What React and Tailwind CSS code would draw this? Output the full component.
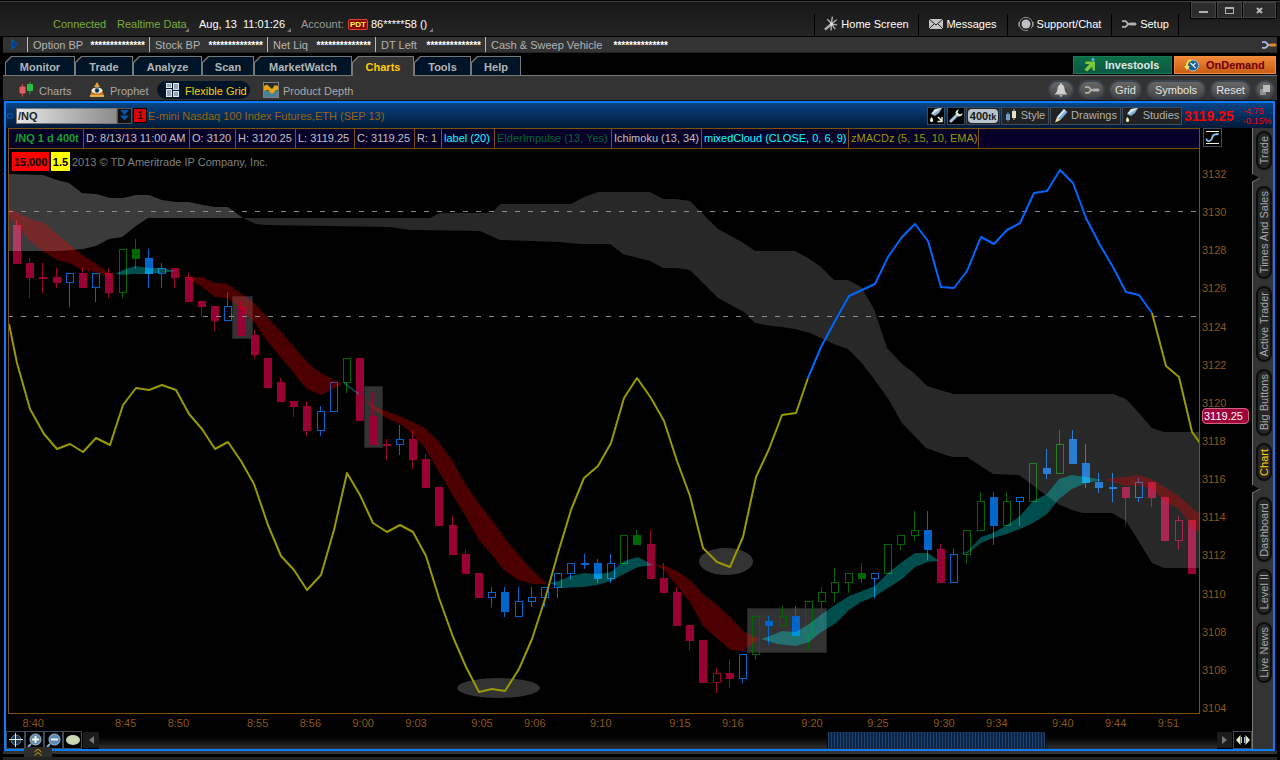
import React, { useState } from 'react';
import clsx from 'clsx';

const menuTabs = [
  { label: 'Monitor', width: 'w-[70px]' },
  { label: 'Trade', width: 'w-[58px]' },
  { label: 'Analyze', width: 'w-[69px]' },
  { label: 'Scan', width: 'w-[52px]' },
  { label: 'MarketWatch', width: 'w-[98px]' },
  { label: 'Charts', width: 'w-[62px]' },
  { label: 'Tools', width: 'w-[57px]' },
  { label: 'Help', width: 'w-[50px]' },
];

const balances = [
  { label: 'Option BP', width: 'w-[122px]' },
  { label: 'Stock BP', width: 'w-[118px]' },
  { label: 'Net Liq', width: 'w-[108px]' },
  { label: 'DT Left', width: 'w-[110px]' },
  { label: 'Cash & Sweep Vehicle', width: 'w-[187px]' },
];

const studies = [
  { text: '/NQ 1 d 400t', style: 'w-[75px] text-center font-bold text-[#14a028]' },
  { text: 'D: 8/13/13 11:00 AM', style: 'w-[106px] text-[#c0c0c0]' },
  { text: 'O: 3120', style: 'w-[46px] text-[#c0c0c0]' },
  { text: 'H: 3120.25', style: 'w-[60px] text-[#c0c0c0]' },
  { text: 'L: 3119.25', style: 'w-[59px] text-[#c0c0c0]' },
  { text: 'C: 3119.25', style: 'w-[60px] text-[#c0c0c0]' },
  { text: 'R: 1', style: 'w-[27px] text-[#c0c0c0]' },
  { text: 'label (20)', style: 'w-[53px] text-[#00ffff]' },
  { text: 'ElderImpulse (13, Yes)', style: 'w-[117px] text-[#006633]' },
  { text: 'Ichimoku (13, 34)', style: 'w-[90px] text-[#c0c0c0]' },
  { text: 'mixedCloud (CLOSE, 0, 6, 9)', style: 'w-[147px] text-[#00ffff]' },
  { text: 'zMACDz (5, 15, 10, EMA)', style: 'w-[130px] text-[#999900]' },
];

const sideTabs = [
  { label: 'Trade', height: 'h-[39px]', notch: true },
  { label: 'Times And Sales', height: 'h-[93px]' },
  { label: 'Active Trader', height: 'h-[76px]' },
  { label: 'Big Buttons', height: 'h-[67px]' },
  { label: 'Chart', height: 'h-[38px]', notch: true },
  { label: 'Dashboard', height: 'h-[65px]' },
  { label: 'Level II', height: 'h-[46px]' },
  { label: 'Live News', height: 'h-[61px]' },
];

const prices = [3132, 3130, 3128, 3126, 3124, 3122, 3120, 3118, 3116, 3114, 3112, 3110, 3108, 3106, 3104];

// [candle index, label]
const times = [
  [1, '8:40'], [8, '8:45'], [12, '8:50'], [18, '8:55'], [22, '8:56'], [26, '9:00'], [30, '9:03'],
  [35, '9:05'], [39, '9:06'], [44, '9:10'], [50, '9:15'], [54, '9:16'], [60, '9:20'], [65, '9:25'],
  [70, '9:30'], [74, '9:34'], [79, '9:40'], [83, '9:44'], [87, '9:51'],
];

// [colour, body top, body bottom, high, low], upper case = solid body
const candles = [
  ['R', 225, 264, 220, 264], ['R', 263, 278, 258, 298], ['R', 277, 279, 263, 293], ['R', 277, 283, 268, 288],
  ['b', 273, 283, 273, 307], ['R', 273, 288, 268, 288], ['b', 273, 288, 273, 302], ['R', 273, 293, 268, 298],
  ['g', 249, 293, 249, 298], ['G', 249, 259, 239, 269], ['B', 258, 274, 249, 288], ['b', 268, 274, 263, 288],
  ['R', 268, 278, 268, 288], ['R', 277, 302, 273, 302], ['R', 301, 307, 301, 317], ['R', 306, 321, 306, 331],
  ['b', 306, 321, 292, 321], ['R', 306, 336, 301, 336], ['R', 335, 355, 330, 359], ['R', 358, 388, 358, 388],
  ['R', 382, 402, 378, 402], ['R', 401, 407, 401, 417], ['R', 406, 431, 401, 436], ['b', 411, 431, 406, 436],
  ['b', 382, 412, 382, 412], ['g', 358, 383, 358, 393], ['R', 358, 421, 358, 421], ['R', 416, 445, 392, 445],
  ['R', 444, 446, 439, 460], ['b', 439, 445, 425, 455], ['R', 439, 460, 430, 469], ['R', 459, 488, 454, 488],
  ['R', 487, 526, 487, 526], ['R', 525, 555, 516, 555], ['R', 554, 574, 549, 574], ['R', 573, 598, 573, 598],
  ['b', 592, 598, 587, 607], ['B', 592, 612, 587, 617], ['b', 601, 617, 587, 617], ['b', 597, 602, 587, 607],
  ['b', 587, 598, 587, 607], ['b', 573, 588, 573, 598], ['b', 563, 574, 563, 579], ['B', 563, 565, 554, 569],
  ['B', 563, 579, 559, 583], ['b', 563, 579, 554, 583], ['g', 535, 564, 535, 564], ['G', 535, 545, 530, 545],
  ['R', 544, 579, 530, 579], ['R', 578, 593, 563, 593], ['R', 592, 626, 587, 626], ['R', 625, 641, 625, 650],
  ['R', 640, 683, 640, 683], ['r', 673, 683, 668, 693], ['R', 673, 679, 659, 688], ['b', 654, 679, 654, 683],
  ['g', 616, 655, 616, 660], ['B', 621, 626, 616, 645], ['g', 616, 626, 606, 626], ['B', 616, 636, 606, 636],
  ['g', 601, 636, 601, 650], ['g', 592, 602, 587, 622], ['g', 582, 593, 568, 602], ['g', 573, 583, 573, 593],
  ['G', 573, 579, 563, 583], ['b', 573, 579, 573, 598], ['g', 544, 574, 544, 574], ['g', 535, 545, 535, 550],
  ['g', 530, 536, 511, 541], ['B', 530, 550, 511, 560], ['R', 549, 583, 544, 583], ['b', 554, 583, 549, 583],
  ['g', 530, 555, 530, 564], ['g', 501, 531, 492, 531], ['B', 497, 526, 492, 545], ['g', 501, 526, 492, 526],
  ['b', 497, 502, 497, 526], ['g', 463, 502, 463, 502], ['B', 468, 474, 449, 479], ['g', 444, 474, 430, 474],
  ['B', 439, 464, 430, 464], ['B', 463, 483, 444, 488], ['B', 482, 488, 473, 493], ['B', 487, 489, 473, 502],
  ['R', 487, 498, 487, 526], ['b', 482, 498, 478, 502], ['R', 482, 498, 482, 507], ['R', 497, 541, 497, 541],
  ['r', 520, 541, 516, 550], ['R', 520, 574, 520, 574],
];

const candleColors = { r: '#990033', g: '#006600', b: '#0066cc' };

const oscillatorLow =
  '9,324 17,363 30,409 44,434 57,449 70,444 83,452 96,438 110,445 123,405 136,388 149,390 162,385 176,390 189,414 202,429 215,449 228,442 241,461 254,484 268,525 281,556 294,570 307,590 321,575 334,530 347,473 360,495 373,523 387,532 400,525 413,532 426,556 439,598 453,637 466,667 479,692 492,689 505,691 519,669 532,639 545,599 558,553 571,510 584,478 598,466 611,443 624,398 637,378 651,398 664,421 677,461 690,496 703,548 717,562 730,567 743,537 756,477 769,449 782,415 796,413 808,378';
const oscillatorHigh =
  '808,378 821,347 835,321 849,296 875,284 888,257 902,237 915,224 928,241 941,287 954,288 967,271 981,237 994,244 1007,230 1020,223 1034,193 1047,191 1060,170 1073,183 1086,218 1100,245 1113,267 1126,292 1139,295 1152,313';
const oscillatorEnd = '1152,313 1166,366 1179,377 1192,432 1200,443';

const bearClouds = [
  '9,209 17,212 30,219 44,223 57,234 69,244 82,255 95,263 109,273 112,275 109,277 95,272 82,270 69,263 57,260 44,252 30,241 17,226 9,217',
  '180,273 189,277 202,277 215,283 228,284 255,304 268,318 282,333 294,347 308,363 321,373 334,380 343,384 333,389 321,395 307,389 300,381 294,373 282,359 268,342 255,323 241,309 228,298 215,297 202,287 189,279',
  '361,395 373,406 386,411 400,416 413,422 425,428 439,442 452,460 466,485 480,505 492,520 506,540 518,554 532,570 547,584 533,584 518,580 504,570 492,555 479,540 466,517 452,494 439,472 425,448 413,434 400,424 386,418 373,409',
  '655,565 664,565 677,571 690,580 703,594 717,605 730,617 743,631 759,639 743,651 730,650 717,638 703,626 690,602 677,586 664,570',
  '1104,480 1113,478 1126,477 1138,475 1152,479 1166,488 1179,496 1192,508 1199,513 1199,532 1192,527 1179,509 1166,502 1152,489 1138,485 1126,486 1113,482',
];

const bullClouds = [
  '115,274 123,270 135,266 149,268 162,268 176,271 162,273 149,274 133,274 123,275',
  '344,382 359,393 359,395 344,384',
  '550,583 558,581 571,576 584,573 598,574 611,572 624,561 638,557 653,565 638,567 624,574 611,581 597,585 583,587 560,588',
  '761,639 770,636 782,631 796,632 809,624 822,614 835,605 849,596 862,591 875,586 888,573 902,562 915,553 928,553 939,561 928,562 915,567 902,579 888,588 874,597 861,602 849,610 836,623 820,633 809,642 796,646 777,644',
  '960,554 968,551 981,537 993,533 1007,525 1020,516 1033,501 1047,494 1059,479 1072,475 1086,477 1103,480 1086,483 1072,489 1059,499 1047,514 1033,523 1020,529 1007,534 993,538 981,543 968,553',
];

const kumoLeft =
  '9,174 43,175 57,180 69,183 82,193 96,194 110,198 123,198 136,195 149,195 162,200 176,202 189,202 203,205 215,207 228,207 243,218 148,218 136,226 122,237 109,239 96,246 83,249 60,251 9,251';
const kumoRight =
  '243,218 430,218 440,213 492,213 500,204 571,204 584,197 598,192 650,192 663,199 676,199 690,201 718,229 742,242 755,251 795,251 808,258 820,266 834,280 848,280 861,287 874,309 887,348 902,364 914,373 927,386 940,390 954,394 1113,394 1126,399 1138,412 1152,428 1164,432 1200,432 ' +
  '1200,568 1164,568 1152,563 1138,540 1126,521 1112,513 1083,513 1072,510 1060,505 1047,496 1019,475 993,474 967,457 952,457 940,453 926,448 902,423 889,400 874,379 861,362 848,349 836,345 810,333 795,329 782,327 772,326 755,323 744,312 718,298 690,270 676,268 663,268 650,261 623,254 610,244 580,244 560,242 500,240 480,231 410,230 390,227 265,225 256,224';

const Candle = ({ index, data }) => {
  const [kind, top, bottom, high, low] = data;
  const x = Math.round(17 + 13.2 * index);
  const color = candleColors[kind.toLowerCase()];
  const solid = kind === kind.toUpperCase();
  return (
    <g shapeRendering="crispEdges">
      {high < top && <rect x={x - 1} y={high} width="1" height={top - high} fill={color} />}
      {low > bottom && <rect x={x - 1} y={bottom} width="1" height={low - bottom} fill={color} />}
      {solid ? (
        <rect x={x - 4} y={top} width="8" height={bottom - top} fill={color} />
      ) : (
        <rect x={x - 3.5} y={top + 0.5} width="7" height={bottom - top - 1} fill="none" stroke={color} />
      )}
    </g>
  );
};

const PriceChart = () => (
  <svg
    className="block h-full w-full"
    viewBox="9 149 1190 564"
    preserveAspectRatio="none"
    role="img"
    aria-label="E-mini Nasdaq 100 candlestick chart"
  >
    {/* marked areas */}
    <g fill="#333333" stroke="#222222">
      <rect x="232.5" y="296.5" width="20" height="42" />
      <rect x="364.5" y="386.5" width="18" height="61" />
      <rect x="747.5" y="608.5" width="79" height="44" />
    </g>
    <g fill="#333333">
      <ellipse cx="498.5" cy="688" rx="41.5" ry="10" />
      <ellipse cx="726" cy="561.5" rx="27" ry="13.5" />
    </g>

    {candles.map((c, i) => (
      <Candle key={i} index={i} data={c} />
    ))}

    {/* clouds */}
    <g fill="#ffffff">
      <polygon points={kumoLeft} fillOpacity="0.23" />
      <polygon points={kumoRight} fillOpacity="0.157" />
    </g>
    <g fill="#ff0000" fillOpacity="0.3">
      {bearClouds.map((p) => <polygon key={p} points={p} />)}
    </g>
    <g fill="#00ffff" fillOpacity="0.3">
      {bullClouds.map((p) => <polygon key={p} points={p} />)}
    </g>

    <g stroke="#8c8c8c" strokeDasharray="5 8" strokeDashoffset="1" shapeRendering="crispEdges">
      <path d="M9 211.5H1199" />
      <path d="M9 316.5H1199" />
    </g>

    <g fill="none" strokeWidth="2" strokeLinejoin="round">
      <polyline points={oscillatorLow} stroke="#999900" />
      <polyline points={oscillatorHigh} stroke="#0066ff" />
      <polyline points={oscillatorEnd} stroke="#999900" />
    </g>
  </svg>
);

const Wrench = ({ className, handle = '#b0b0b0', head = '#b0b0b0' }) => (
  <svg className={className} width="16" height="8" viewBox="0 0 16 8" aria-hidden="true">
    <path d="M1 1.2h3.5L6.5 3v2L4.5 6.8H1" fill="none" stroke={head} strokeWidth="1.8" />
    <path d="M6 4h3" stroke={head} strokeWidth="2" />
    <rect x="8" y="2.5" width="7.5" height="3" rx="1.5" fill={handle} />
  </svg>
);

const Corner = () => (
  <svg className="mt-3 shrink-0" width="4" height="4" viewBox="0 0 4 4" aria-hidden="true">
    <path d="M4 0v4H0z" fill="#777" />
  </svg>
);

const SpiderIcon = () => (
  <svg width="14" height="16" viewBox="0 0 15 17" fill="none" stroke="#b0b0b0" aria-hidden="true">
    <path d="M9 0.5L8 7M3.5 3.5l4 4M13.5 4l-5 4M14 9.5L8 8.5M12 14L8.5 9M7.5 15.5L8 9" strokeWidth="1.5" />
    <path d="M1 14.5L7.5 9" strokeWidth="2.6" />
    <circle cx="8" cy="8.5" r="1.8" fill="#ddd" stroke="none" />
  </svg>
);

const MailIcon = () => (
  <svg width="14" height="10" viewBox="0 0 14 10" aria-hidden="true">
    <rect width="14" height="10" fill="#c4c4c4" />
    <path d="M0 0l7 6 7-6M0 10l5-5M14 10L9 5" fill="none" stroke="#222" />
  </svg>
);

const HeadsetIcon = () => (
  <svg width="16" height="16" viewBox="0 0 16 16" aria-hidden="true">
    <circle cx="8" cy="8" r="4.5" fill="#c0c0c0" />
    <path d="M3 12.5a6.7 6.7 0 1 1 10 0" fill="none" stroke="#8c8c8c" />
    <path d="M1.2 6v4.5M14.8 6v4.5" stroke="#a0a0a0" strokeWidth="1.4" />
    <path d="M3 12.5q3 3 7 2" fill="none" stroke="#8c8c8c" />
  </svg>
);

const CandlesIcon = () => (
  <svg width="15" height="15" viewBox="0 0 15 15" aria-hidden="true">
    <path d="M3.5 2v12.5" stroke="#c44" strokeWidth="1.2" />
    <rect x="0.5" y="4.5" width="6" height="7" rx="1" fill="#e06060" />
    <path d="M11 0v12" stroke="#1a8f2a" strokeWidth="1.2" />
    <rect x="8" y="2" width="6" height="7" rx="1" fill="#28c040" />
  </svg>
);

const ProphetIcon = () => (
  <svg width="16" height="15" viewBox="0 0 16 15" aria-hidden="true">
    <path d="M8 0l3 5H5z" fill="#f0a030" />
    <path d="M4 6h8l3.5 8.5H.5z" fill="#c87820" />
    <path d="M1 14h14" stroke="#f4c060" strokeWidth="1.6" />
    <ellipse cx="8" cy="8.5" rx="5.5" ry="3" fill="#f4ead8" />
    <circle cx="8" cy="8.5" r="2.4" fill="#24628c" />
    <circle cx="8" cy="8.5" r="1" fill="#000" />
  </svg>
);

const FlexGridIcon = () => (
  <svg width="14" height="14" viewBox="0 0 14 14" fill="#8ea4b6" stroke="#dce8f0" aria-hidden="true">
    <rect x="0.5" y="0.5" width="5" height="4" />
    <rect x="7.5" y="0.5" width="5" height="6" />
    <rect x="0.5" y="6.5" width="5" height="7" />
    <rect x="7.5" y="8.5" width="5" height="5" />
  </svg>
);

const DepthIcon = () => (
  <svg width="16" height="16" viewBox="0 0 16 16" aria-hidden="true">
    <rect x="0.5" y="0.5" width="15" height="15" fill="#2a2a2a" stroke="#808080" />
    <path d="M1 9h14v6H1z" fill="#4d8296" />
    <path d="M1 4l3-1.500 5 4.500 3-4 3 1v4l-3 1-3 3-4-4-4 1z" fill="#e0a818" />
  </svg>
);

const InvestIcon = () => (
  <svg width="13" height="14" viewBox="0 0 13 14" aria-hidden="true">
    <path d="M1.5 3.5H11v9H8.5v-4L3 13.5.5 11.5l5-5.500h-4z" fill="#7ec83c" />
    <circle cx="9" cy="1.500" r="1.500" fill="#6ab0e8" />
  </svg>
);

const ReplayIcon = () => (
  <svg width="15" height="13" viewBox="0 0 15 13" aria-hidden="true">
    <circle cx="9" cy="6.5" r="5.5" fill="#1d5f8c" stroke="#9cc4dc" />
    <path d="M6.5 4l5 5M11.5 4L9 6.5" stroke="#e4f0f8" strokeWidth="1.2" />
    <path d="M7 1Q2.5 2.5 3 7" fill="none" stroke="#f8d840" strokeWidth="2" />
    <path d="M0 7h6l-3 4z" fill="#f8e060" />
  </svg>
);

const BellIcon = () => (
  <svg width="14" height="14" viewBox="0 0 14 14" fill="#d0d0d0" aria-hidden="true">
    <path d="M7 0q1 0 1 1.5 2.5 1 2.5 4.5 0 3 3 5.5H.5Q3.5 9 3.5 6 3.5 2.5 6 1.5 6 0 7 0z" />
    <path d="M5 12.3h4L7 14z" />
  </svg>
);

const BrushIcon = ({ arrow }) => (
  <svg width="15" height="15" viewBox="0 0 15 15" aria-hidden="true">
    <path d="M6 1l7-1-3 5-4 3-4-2z" fill="#8ab0d0" />
    <path d="M6 1l7-1-9 6-1.5-.5z" fill="#d8e8f4" />
    <path d="M2.5 9q2.5 3 1.2 4.500-1.200 1-2.200 0Q0 12 2.500 9z" fill="#e8f0c0" />
    {arrow && <path d="M9 9l3.5 3.5M13 9v4.5H8.5" fill="none" stroke="#e8f0d8" strokeWidth="1.5" />}
  </svg>
);

const SpannerIcon = () => (
  <svg width="14" height="14" viewBox="0 0 14 14" aria-hidden="true">
    <path d="M2 12l6-6" stroke="#a8c4dc" strokeWidth="3" strokeLinecap="round" />
    <path d="M10 0.5Q6.5 1 6.5 4.5l3 3Q13.5 7.5 13.5 4L11 5.5l-2.500-2z" fill="#e4ecd0" />
  </svg>
);

const PencilIcon = () => (
  <svg width="14" height="14" viewBox="0 0 14 14" aria-hidden="true">
    <path d="M10 0l3.500 3-7 8-3.500-3z" fill="#7fb0dc" />
    <path d="M10 0l1.500 1.500-7 7.500L3 8z" fill="#d4e8f8" />
    <path d="M3 8l3.500 3L1 13.500z" fill="#e8e0b0" />
  </svg>
);

const StyleIcon = () => (
  <svg width="12" height="13" viewBox="0 0 12 13" aria-hidden="true">
    <path d="M3 3v10" stroke="#5a86ac" />
    <rect x="1" y="5" width="4" height="6" fill="#6f9cc4" />
    <path d="M9 0v11" stroke="#b8c8a8" />
    <rect x="7" y="2" width="4" height="7" fill="#dce4cc" />
  </svg>
);

const TopBar = () => {
  const links = [
    { label: 'Home Screen', icon: <SpiderIcon />, width: 'w-[104px]' },
    { label: 'Messages', icon: <MailIcon />, width: 'w-[89px]' },
    { label: 'Support/Chat', icon: <HeadsetIcon />, width: 'w-[104px]' },
    { label: 'Setup', icon: <Wrench />, width: 'w-[67px]' },
  ];

  return (
    <header className="flex h-[37px] shrink-0 border-t border-b border-black bg-[#1c1c1c]">
      <div className="flex flex-1 border-t border-[#3c3c3c] bg-linear-to-b from-[#181818] to-[#242424] pr-[3px]">
        <div className="flex flex-1 items-center pt-[10px] pl-[53px] whitespace-nowrap text-[#7aab3c]">
          <span className="w-16">Connected</span>
          <span className="w-[68px]">Realtime Data</span>
          <Corner />
          <span className="ml-[10px] w-[88px] whitespace-pre text-white">Aug, 13  11:01:26</span>
          <Corner />
          <span className="ml-[10px] w-[47px] text-[#999]">Account:</span>
          <span className="mr-[3px] h-[11px] w-5 rounded-xs border border-[#e04040] bg-[#8c0000] text-center text-[8px] leading-[9px] font-bold text-[#ffff40]">
            PDT
          </span>
          <span className="w-[58px] text-white">86*****58 ()</span>
          <Corner />
        </div>
        <nav className="flex text-white">
          {links.map((link) => (
            <a
              key={link.label}
              href="#"
              className={clsx('mt-3 flex items-center justify-center gap-[3px] border-l border-black pb-[2px] whitespace-nowrap', link.width)}
            >
              {link.icon}
              {link.label}
            </a>
          ))}
          <div className="mt-3 w-3 border-l border-black" />
        </nav>
        <div className="flex h-[17px] gap-px bg-black px-px pb-px">
          <button aria-label="Minimize" className="flex w-[25px] items-center justify-center border border-[#444] bg-[#2c2c2c]">
            <span className="mt-1 h-[2px] w-[9px] bg-[#b0b0b0]" />
          </button>
          <button aria-label="Maximize" className="flex w-[25px] items-center justify-center border border-[#444] bg-[#2c2c2c]">
            <span className="h-[7px] w-[9px] border border-t-2 border-[#b0b0b0]" />
          </button>
          <button aria-label="Close" className="flex w-[33px] items-center justify-center border border-[#444] bg-[#2c2c2c]">
            <svg width="7" height="7" viewBox="0 0 7 7"><path d="M1 1l5 5M6 1L1 6" stroke="#b8b8b8" strokeWidth="2" /></svg>
          </button>
        </div>
      </div>
    </header>
  );
};

const AccountBar = () => (
  <div className="mx-[3px] flex h-4 shrink-0 items-center border-b border-[#222] bg-[#333]">
    <svg className="mr-[9px] ml-2 shrink-0" width="7" height="11" viewBox="0 0 7 11" aria-hidden="true">
      <path d="M1 0.5l5 5-5 5z" fill="#003c80" stroke="#0060c0" />
    </svg>
    {balances.map((b) => (
      <div
        key={b.label}
        className={clsx('flex h-[15px] shrink-0 items-center justify-between border-l border-[#bbb] pt-px pr-1 pl-[5px] text-[#b4b4b4]', b.width)}
      >
        <span>{b.label}</span>
        <span className="text-[10px] font-bold text-white">**************</span>
      </div>
    ))}
    <Wrench className="ml-auto" head="#a8b8e0" handle="#e08a20" />
  </div>
);

const MenuTabs = () => {
  const [active, setActive] = useState('Charts');

  return (
    <div className="mx-[3px] mt-[3px] flex h-[20px] shrink-0 justify-between border-b border-[#777]">
      <nav className="-mb-px flex pl-[2px]">
        {menuTabs.map(({ label, width }) => (
          <button
            key={label}
            onClick={() => setActive(label)}
            className={clsx(
              'bg-[#777] pt-px pr-px pl-px font-bold [clip-path:polygon(6px_0,100%_0,100%_100%,0_100%,0_6px)]',
              active !== label && 'pb-px',
              width
            )}
          >
            <span
              className={clsx(
                'flex h-full items-center justify-center pt-[2px] [clip-path:polygon(6px_0,100%_0,100%_100%,0_100%,0_6px)]',
                active === label ? 'bg-[#333] text-[#ffcc00]' : 'bg-[#001428] text-[#b4b4b4]'
              )}
            >
              {label}
            </span>
          </button>
        ))}
      </nav>
      <div className="flex gap-[2px] pr-px pb-px">
        <button className="flex w-[99px] items-center gap-2 border border-[#1a7a58] bg-linear-to-b from-[#0c7048] to-[#0c5844] pl-[10px] font-bold text-[#e0e8e0]">
          <InvestIcon />
          Investools
        </button>
        <button className="flex w-[102px] items-center gap-[7px] border border-[#f09040] bg-linear-to-b from-[#f08838] to-[#c85c10] pl-[9px] font-bold text-[#6c0000]">
          <ReplayIcon />
          OnDemand
        </button>
      </div>
    </div>
  );
};

const PILL = 'flex h-[19px] items-center justify-center rounded-full border-2 border-[#3c4450] bg-linear-to-b from-[#666] to-[#484848] text-[#e4e4e4]';

const SubNav = () => (
  <div className="mx-[3px] flex h-[25px] shrink-0 items-center border-b border-[#111] bg-[#333] pt-[3px] text-[#a8a8a8]">
    <button className="ml-4 flex w-[70px] items-center gap-[5px]"><CandlesIcon /><span className="pt-[3px]">Charts</span></button>
    <button className="flex w-[68px] items-center gap-[5px]"><ProphetIcon /><span className="pt-[3px]">Prophet</span></button>
    <button className="flex h-[18px] w-[93px] items-center gap-[5px] rounded-full bg-[#001428] pl-[9px] whitespace-nowrap text-[#ffcc00]">
      <FlexGridIcon />
      <span className="pt-[3px]">Flexible Grid</span>
    </button>
    <button className="ml-[13px] flex items-center gap-1 whitespace-nowrap"><DepthIcon /><span className="pt-[3px]">Product Depth</span></button>
    <div className="mr-[2px] ml-auto flex gap-1">
      <button aria-label="Alerts" className={clsx(PILL, 'w-[26px]')}><BellIcon /></button>
      <button aria-label="Settings" className={clsx(PILL, 'w-[27px]')}><Wrench /></button>
      <button className={clsx(PILL, 'w-[33px] pt-[2px]')}>Grid</button>
      <button className={clsx(PILL, 'w-[60px] pt-[2px]')}>Symbols</button>
      <button className={clsx(PILL, 'w-[41px] pt-[2px]')}>Reset</button>
      <button aria-label="Detach" className={clsx(PILL, 'w-5')}>
        <svg width="10" height="10" viewBox="0 0 10 10"><path d="M0 4h6v6H0z" fill="#909090" /><path d="M3 0h7v7H3z" fill="#bbb" /></svg>
      </button>
    </div>
  </div>
);

const TOOL = 'flex h-[18px] items-center justify-center border border-[#3c4c5c] bg-[#222] text-[#b0b0b0]';

const SymbolBar = () => (
  <div className="flex h-[25px] shrink-0 items-center bg-linear-to-b from-[#0a4488] to-[#021a38] pr-[2px] pl-px">
    <span className="mr-[3px] size-[6px] shrink-0 rounded-full border border-[#0060c0]" />
    <input
      aria-label="Symbol"
      defaultValue="/NQ"
      className="h-4 w-[101px] border border-[#777] bg-linear-to-r from-[#e8e8e8] to-[#8c8c8c] pl-px font-bold text-[#222]"
    />
    <button aria-label="Symbol list" className="flex h-4 w-[15px] items-center justify-center border border-[#555] bg-[#111]">
      <svg width="9" height="11" viewBox="0 0 9 11"><path d="M0 0h9L4.5 5zM0 5.5h9l-4.5 5z" fill="#0a54a8" /></svg>
    </button>
    <button className="mr-px ml-px h-[15px] w-[14px] border border-black bg-[#e00000] leading-[13px] text-black">1</button>
    <span className="pt-px whitespace-nowrap text-[#9c640c]">E-mini Nasdaq 100 Index Futures,ETH (SEP 13)</span>
    <div className="ml-auto flex gap-px">
      <button aria-label="Edit studies" className={clsx(TOOL, 'mr-px w-[18px] bg-black')}><BrushIcon arrow /></button>
      <button aria-label="Chart settings" className={clsx(TOOL, 'w-[18px] bg-black')}><SpannerIcon /></button>
      <button className={clsx(TOOL, 'w-[34px]')}>
        <span className="h-[14px] w-[30px] rounded-sm bg-[#b8c4cc] text-center leading-[14px] font-bold text-[#181818]">400<span className="text-[9px]">tk</span></span>
      </button>
      <button className={clsx(TOOL, 'w-12 gap-1')}><StyleIcon />Style</button>
      <button className={clsx(TOOL, 'w-[71px] gap-[3px]')}><PencilIcon />Drawings</button>
      <button className={clsx(TOOL, 'w-[60px] gap-[3px]')}><BrushIcon />Studies</button>
    </div>
    <span className="ml-[2px] w-[59px] pt-px text-[14px] font-bold text-[#ff0000]">3119.25</span>
    <span className="w-7 text-[9px] leading-[10px] whitespace-nowrap text-[#ff0000]">-4.75<br />-0.15%</span>
  </div>
);

const StudyBar = () => (
  <div className="flex h-[21px] shrink-0">
    <div className="flex min-w-0 flex-1 border border-[#80500f] bg-[#060028]">
      {studies.map(({ text, style }) => (
        <span key={text} className={clsx('shrink-0 border-r border-[#80500f] pl-[2px] leading-[18px] whitespace-nowrap', style)}>
          {text}
        </span>
      ))}
    </div>
    <div className="w-[52px] pl-[3px]">
      <button aria-label="Toggle curve" className="size-[19px] border border-[#3c4c5c] bg-black p-px">
        <svg width="15" height="15" viewBox="0 0 15 15" fill="none">
          <path d="M1 1.5h13M1 13.5h13" stroke="#f0f4d8" />
          <path d="M1.5 8.5q0 3 3 2.5 2.5-1 3-4 .5-3 6-3" stroke="#8cc4ec" strokeWidth="1.8" />
        </svg>
      </button>
    </div>
  </div>
);

const SideTabs = () => {
  const [active, setActive] = useState('Chart');

  return (
    <aside className="flex w-[21px] shrink-0 flex-col items-end gap-[7px] border-l border-[#777] bg-[#333] pt-[3px] pr-px">
      {sideTabs.map(({ label, height, notch }) => (
        <React.Fragment key={label}>
          <button
            onClick={() => setActive(label)}
            className={clsx(
              'flex w-4 shrink-0 items-center justify-center rounded-lg border-2 border-[#0c0c0c] bg-[#262626]',
              active === label ? 'text-[#ffcc00]' : 'text-[#a8a8a8]',
              height
            )}
          >
            <span className="rotate-180 leading-3 whitespace-nowrap [writing-mode:vertical-rl]">{label}</span>
          </button>
          {notch && (
            <svg className="-my-[3px] -ml-px shrink-0 self-start" width="9" height="8" viewBox="0 0 9 8" aria-hidden="true">
              <path d="M0 0l8 4-8 4z" fill="#000" />
              <path d="M0 8l8-4" stroke="#777" />
            </svg>
          )}
        </React.Fragment>
      ))}
    </aside>
  );
};

const ChartArea = () => (
  <div className="flex min-h-0 flex-1">
    <div className="flex min-w-0 flex-1 flex-col">
      <div className="relative min-h-0 flex-1 border border-t-0 border-[#80500f]">
        <PriceChart />
        <div className="absolute top-[3px] left-[3px] flex items-center gap-[2px] whitespace-nowrap">
          <span className="h-[19px] w-[37px] bg-[#ff0000] text-center leading-[20px] font-bold text-black">15,000</span>
          <span className="h-[19px] w-[19px] bg-[#ffff00] text-center leading-[20px] font-bold text-black">1.5</span>
          <span className="pt-[2px] text-[#808080]">2013 © TD Ameritrade IP Company, Inc.</span>
        </div>
      </div>
      <div className="relative h-[17px] shrink-0 text-[#8c5814]">
        {times.map(([index, label]) => (
          <span
            key={label}
            className="absolute top-[3px] -translate-x-1/2"
            style={{ left: `${((12 + 13.2 * index) / 1192) * 100}%` }}
          >
            {label}
          </span>
        ))}
      </div>
    </div>
    <div className="relative mb-4 flex w-[52px] flex-col justify-between pt-[18px] pl-[2px] text-[#8c5814]">
      {prices.map((p) => (
        <span key={p} className="leading-[14px]">{p}</span>
      ))}
      <span
        className="absolute left-[2px] h-4 w-[47px] rounded-sm border border-[#d06088] bg-[#a00038] pl-px leading-[14px] text-white"
        style={{ top: `${((416 - 157) / 565) * 100}%` }}
      >
        3119.25
      </span>
    </div>
  </div>
);

const ZOOM = 'flex h-[18px] w-[19px] shrink-0 items-center justify-center border border-[#3c4c5c] bg-black';

const ScrollBar = () => (
  <div className="flex h-[18px] shrink-0">
    <button aria-label="Crosshair" className={ZOOM}>
      <svg width="14" height="14" viewBox="0 0 14 14">
        <circle cx="7" cy="7" r="5" fill="#22384c" stroke="#5c7c98" />
        <path d="M6.5 0v14M0 6.5h14" stroke="#e8f0d8" />
      </svg>
    </button>
    <button aria-label="Zoom in" className={ZOOM}>
      <svg width="15" height="15" viewBox="0 0 15 15">
        <path d="M1 14l3-3" stroke="#88b0d8" strokeWidth="2" />
        <circle cx="8.5" cy="6.5" r="5.5" fill="#5c88b8" stroke="#a8c4dc" />
        <path d="M8.5 3v7M5 6.5h7" stroke="#f4f8dc" strokeWidth="2" />
      </svg>
    </button>
    <button aria-label="Zoom out" className={ZOOM}>
      <svg width="15" height="15" viewBox="0 0 15 15">
        <path d="M1 14l3-3" stroke="#88b0d8" strokeWidth="2" />
        <circle cx="8.5" cy="6.5" r="5.5" fill="#5c88b8" stroke="#a8c4dc" />
        <path d="M5 6.5h7" stroke="#f4f8dc" strokeWidth="2" />
      </svg>
    </button>
    <button aria-label="Reset zoom" className={ZOOM}>
      <svg width="14" height="10" viewBox="0 0 14 10"><ellipse cx="7" cy="5" rx="7" ry="5" fill="#ccd8b4" /></svg>
    </button>
    <button aria-label="Scroll left" className="ml-px flex h-4 w-4 shrink-0 items-center justify-center self-center bg-[#1c1c1c]">
      <svg width="5" height="8" viewBox="0 0 5 8"><path d="M5 0v8L0 4z" fill="#777" /></svg>
    </button>
    <div className="flex flex-1 bg-linear-to-b from-black to-[#303030] py-px">
      <div className="flex-[731]" />
      <div className="flex-[217] border-x border-black bg-[#0c2444] bg-[repeating-linear-gradient(90deg,#1c4474_0_1px,#0c2444_1px_3px)]" />
      <div className="flex-[172]" />
    </div>
    <button aria-label="Scroll right" className="mr-px flex h-4 w-[15px] shrink-0 items-center justify-center self-center bg-[#1c1c1c]">
      <svg width="5" height="8" viewBox="0 0 5 8"><path d="M0 0v8l5-4z" fill="#777" /></svg>
    </button>
    <button aria-label="Expand" className={ZOOM}>
      <svg width="14" height="10" viewBox="0 0 14 10">
        <path d="M4.5 0v10L0 5zM9.5 0v10L14 5z" fill="#e0ecc8" />
        <path d="M5.5 2v6M8.5 2v6" stroke="#a8c0dc" />
      </svg>
    </button>
  </div>
);

const App = () => {
  return (
    <div className="flex h-screen flex-col overflow-hidden bg-black font-['Liberation_Sans',Arial,sans-serif] text-[11px] leading-[13px]">
      <TopBar />
      <AccountBar />
      <MenuTabs />
      <SubNav />
      <main className="mr-[5px] ml-1 flex min-h-0 flex-1 flex-col border-2 border-[#0a7cff]">
        <SymbolBar />
        <div className="flex min-h-0 flex-1">
          <div className="flex min-w-0 flex-1 flex-col">
            <div className="flex min-h-0 flex-1 flex-col pl-[2px]">
              <StudyBar />
              <ChartArea />
            </div>
            <ScrollBar />
          </div>
          <SideTabs />
        </div>
      </main>
      <footer className="relative mx-[3px] h-[9px] shrink-0 border-b-3 border-[#222]">
        <div className="h-[3px] bg-[#333]" />
        <button
          aria-label="Show gadgets"
          className="absolute -top-1 left-[21px] flex h-[10px] w-7 items-center justify-center rounded-t-sm bg-[#2c2c2c]"
        >
          <svg width="8" height="8" viewBox="0 0 8 8" fill="none" stroke="#d8a800">
            <path d="M0.5 4L4 1l3.5 3M0.5 7.500L4 4.500l3.500 3" />
          </svg>
        </button>
      </footer>
    </div>
  );
};

export default App;
